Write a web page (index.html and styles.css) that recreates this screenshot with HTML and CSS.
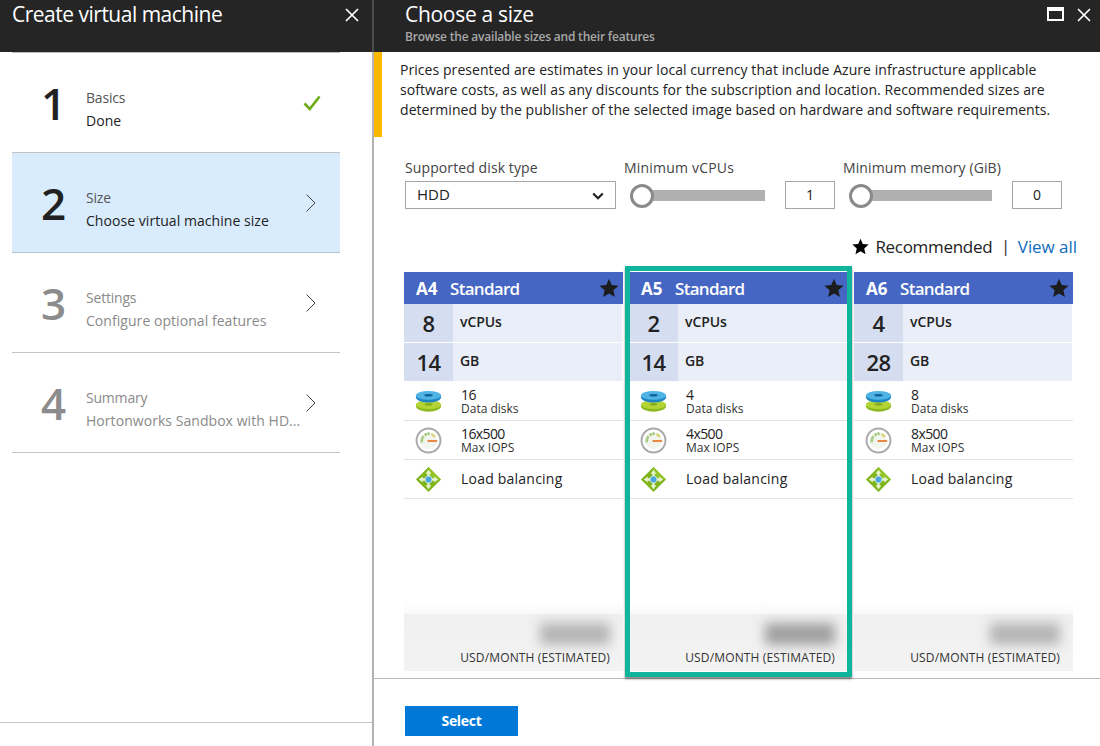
FILE: index.html
```html
<!DOCTYPE html>
<html lang="en">
<head>
<meta charset="utf-8">
<title>Choose a size</title>
<link rel="stylesheet" href="styles.css">
</head>
<body>
<svg class="defs" width="0" height="0">
  <defs>
    <symbol id="i-disk" viewBox="0 0 28 28">
      <ellipse cx="14" cy="19" rx="13" ry="5.5" fill="#8dbb1f"/>
      <ellipse cx="14" cy="17.2" rx="13" ry="4.6" fill="#b4d334"/>
      <ellipse cx="14" cy="17" rx="4" ry="1.2" fill="#7fa81a"/>
      <ellipse cx="14" cy="9.5" rx="13" ry="5.5" fill="#1f86c6"/>
      <ellipse cx="14" cy="7.6" rx="13" ry="4.6" fill="#4fb4e4"/>
      <ellipse cx="14" cy="7.6" rx="4.4" ry="1.3" fill="#12609a"/>
    </symbol>
    <symbol id="i-gauge" viewBox="0 0 28 28">
      <circle cx="14" cy="14" r="12.4" fill="#fff" stroke="#a9a9a9" stroke-width="2"/>
      <circle cx="14" cy="14" r="8.8" fill="#f2f4ee"/>
      <path d="M7 16a7.5 7.5 0 0 1 2-6.5" fill="none" stroke="#a9cf86" stroke-width="2.6"/>
      <path d="M10.2 8.4a7.5 7.5 0 0 1 5-1.3" fill="none" stroke="#8fbf5a" stroke-width="2.6" stroke-dasharray="2 1"/>
      <path d="M17 7.4a7.5 7.5 0 0 1 3.6 3" fill="none" stroke="#d9d37a" stroke-width="2.4"/>
      <path d="M13 14.5h10" stroke="#e8772e" stroke-width="1.8"/>
    </symbol>
    <symbol id="i-lb" viewBox="0 0 28 28">
      <path d="M14 1 27 14 14 27 1 14Z" fill="#7fb41c"/>
      <path d="M14 1 27 14 14 14Z" fill="#93c526"/>
      <path d="M14 4 17 8H15.2V11H12.8V8H11ZM14 24 11 20H12.8V17H15.2V20H17ZM4 14 8 11V12.8H11V15.2H8V17ZM24 14 20 17V15.2H17V12.8H20V11Z" fill="#e8f3cf"/>
      <circle cx="14" cy="14" r="3.6" fill="#4aa6dc" stroke="#d9eef9" stroke-width=".8"/>
    </symbol>
    <symbol id="i-star" viewBox="0 0 20 20">
      <path d="M10 .8 12.7 7.1 19.6 7.7 14.4 12.3 15.9 19.1 10 15.5 4.1 19.1 5.6 12.3 .4 7.7 7.3 7.1Z"/>
    </symbol>
    <symbol id="i-chev" viewBox="0 0 12 20">
      <path d="M1.5 1.5 10 10 1.5 18.5" fill="none" stroke="currentColor" stroke-width="1"/>
    </symbol>
    <symbol id="i-x" viewBox="0 0 14 14">
      <path d="M1 1 13 13M13 1 1 13" fill="none" stroke="currentColor" stroke-width="1.7"/>
    </symbol>
  </defs>
</svg>
<div class="app">
  <section class="left">
    <header class="left-head">
      <h1 class="left-title">Create virtual machine</h1>
      <svg class="close"><use href="#i-x"/></svg>
    </header>
    <div class="steps">
      <div class="step">
        <span class="step-num">1</span>
        <div class="step-text"><span class="step-name">Basics</span><span class="step-desc">Done</span></div>
        <svg class="check" viewBox="0 0 18 16"><path d="M1.5 8.5 6.8 14 16.5 1.5" fill="none" stroke="#6bab13" stroke-width="2.6"/></svg>
      </div>
      <div class="step step-active">
        <span class="step-num">2</span>
        <div class="step-text"><span class="step-name">Size</span><span class="step-desc">Choose virtual machine size</span></div>
        <svg class="chev"><use href="#i-chev"/></svg>
      </div>
      <div class="step step-muted">
        <span class="step-num">3</span>
        <div class="step-text"><span class="step-name">Settings</span><span class="step-desc">Configure optional features</span></div>
        <svg class="chev"><use href="#i-chev"/></svg>
      </div>
      <div class="step step-muted">
        <span class="step-num">4</span>
        <div class="step-text"><span class="step-name">Summary</span><span class="step-desc">Hortonworks Sandbox with HD...</span></div>
        <svg class="chev"><use href="#i-chev"/></svg>
      </div>
    </div>
    <div class="left-foot"></div>
  </section>
  <section class="right">
    <header class="right-head">
      <div>
        <h2 class="right-title">Choose a size</h2>
        <p class="right-sub">Browse the available sizes and their features</p>
      </div>
      <div class="win-btns">
        <span class="maximize"></span>
        <svg class="close close-right"><use href="#i-x"/></svg>
      </div>
    </header>
    <div class="notice">Prices presented are estimates in your local currency that include Azure infrastructure applicable software costs, as well as any discounts for the subscription and location. Recommended sizes are determined by the publisher of the selected image based on hardware and software requirements.</div>
    <div class="filters">
      <div class="filter filter-disk">
        <label class="filter-label">Supported disk type</label>
        <div class="select"><span>HDD</span><svg class="select-arrow" viewBox="0 0 12 8"><path d="M1.2 1.5 6 6.2 10.8 1.5" fill="none" stroke="#222" stroke-width="2.2"/></svg></div>
      </div>
      <div class="filter filter-cpu">
        <label class="filter-label">Minimum vCPUs</label>
        <div class="slider-row">
          <div class="slider"><span class="thumb"></span></div>
          <span class="num-box">1</span>
        </div>
      </div>
      <div class="filter filter-mem">
        <label class="filter-label">Minimum memory (GiB)</label>
        <div class="slider-row">
          <div class="slider"><span class="thumb"></span></div>
          <span class="num-box">0</span>
        </div>
      </div>
    </div>
    <div class="rec-row">
      <svg class="rec-star"><use href="#i-star"/></svg>
      <span>Recommended</span><span class="rec-sep">|</span><a class="rec-link">View all</a>
    </div>
    <div class="cards">
      <article class="card">
        <div class="card-head"><span class="card-id">A4</span><span class="card-tier">Standard</span><svg class="card-star"><use href="#i-star"/></svg></div>
        <div class="spec"><span class="spec-num">8</span><span class="spec-unit">vCPUs</span></div>
        <div class="spec"><span class="spec-num">14</span><span class="spec-unit">GB</span></div>
        <div class="feat"><svg class="feat-icon"><use href="#i-disk"/></svg><div class="feat-text"><span class="feat-val">16</span><span class="feat-lab">Data disks</span></div></div>
        <div class="feat"><svg class="feat-icon"><use href="#i-gauge"/></svg><div class="feat-text"><span class="feat-val">16x500</span><span class="feat-lab">Max IOPS</span></div></div>
        <div class="feat"><svg class="feat-icon"><use href="#i-lb"/></svg><div class="feat-text"><span class="feat-only">Load balancing</span></div></div>
        <div class="price"><div class="price-band"><span class="price-blur"></span></div><span class="price-unit">USD/MONTH (ESTIMATED)</span></div>
      </article>
      <article class="card card-selected">
        <div class="card-head"><span class="card-id">A5</span><span class="card-tier">Standard</span><svg class="card-star"><use href="#i-star"/></svg></div>
        <div class="spec"><span class="spec-num">2</span><span class="spec-unit">vCPUs</span></div>
        <div class="spec"><span class="spec-num">14</span><span class="spec-unit">GB</span></div>
        <div class="feat"><svg class="feat-icon"><use href="#i-disk"/></svg><div class="feat-text"><span class="feat-val">4</span><span class="feat-lab">Data disks</span></div></div>
        <div class="feat"><svg class="feat-icon"><use href="#i-gauge"/></svg><div class="feat-text"><span class="feat-val">4x500</span><span class="feat-lab">Max IOPS</span></div></div>
        <div class="feat"><svg class="feat-icon"><use href="#i-lb"/></svg><div class="feat-text"><span class="feat-only">Load balancing</span></div></div>
        <div class="price"><div class="price-band"><span class="price-blur"></span></div><span class="price-unit">USD/MONTH (ESTIMATED)</span></div>
      </article>
      <article class="card">
        <div class="card-head"><span class="card-id">A6</span><span class="card-tier">Standard</span><svg class="card-star"><use href="#i-star"/></svg></div>
        <div class="spec"><span class="spec-num">4</span><span class="spec-unit">vCPUs</span></div>
        <div class="spec"><span class="spec-num">28</span><span class="spec-unit">GB</span></div>
        <div class="feat"><svg class="feat-icon"><use href="#i-disk"/></svg><div class="feat-text"><span class="feat-val">8</span><span class="feat-lab">Data disks</span></div></div>
        <div class="feat"><svg class="feat-icon"><use href="#i-gauge"/></svg><div class="feat-text"><span class="feat-val">8x500</span><span class="feat-lab">Max IOPS</span></div></div>
        <div class="feat"><svg class="feat-icon"><use href="#i-lb"/></svg><div class="feat-text"><span class="feat-only">Load balancing</span></div></div>
        <div class="price"><div class="price-band"><span class="price-blur"></span></div><span class="price-unit">USD/MONTH (ESTIMATED)</span></div>
      </article>
    </div>
    <footer class="right-foot"><button class="select-btn">Select</button></footer>
  </section>
</div>
</body>
</html>
```
FILE: styles.css
```css
* { box-sizing: border-box; }
html, body { margin: 0; height: 100%; }
body {
  width: 1100px;
  height: 746px;
  overflow: hidden;
  background: #fff;
  color: #222;
  font-family: "Open Sans", "Noto Sans", "Liberation Sans", sans-serif;
  font-size: 14px;
}
.defs { position: absolute; }
.app { display: flex; height: 746px; }

/* Left blade */
.left {
  width: 374px;
  flex: none;
  display: flex;
  flex-direction: column;
  border-right: 2px solid #b3b3b3;
}
.left-head {
  height: 52px;
  flex: none;
  background: #252525;
  color: #fff;
  display: flex;
  justify-content: space-between;
  padding: 0 12px;
  margin-right: -2px;
  border-right: 2px solid #4a4a4a;
}
.left-title {
  margin: 0;
  font-size: 21px;
  font-weight: 400;
  line-height: 29px;
  letter-spacing: -.5px;
}
.close { width: 14px; height: 14px; color: #fff; margin: 8px 1px 0 0; }
.steps { flex: none; margin: 0 32px 0 12px; border-top: 1px solid #bdbdbd; }
.step {
  height: 100px;
  display: flex;
  align-items: center;
  padding-left: 29px;
  border-bottom: 1px solid #c4c4c4;
}
.step-active { background: #d9ecfd; border-bottom-color: #b9c6d2; }
.step-num {
  width: 45px;
  flex: none;
  font-size: 44px;
  line-height: 48px;
  font-weight: 600;
  color: #222;
  letter-spacing: -1px;
}
.step-text { display: flex; flex-direction: column; flex: 1; min-width: 0; gap: 3px; padding-top: 13px; }
.step-name { font-size: 14px; line-height: 20px; color: #555; letter-spacing: -.2px; }
.step-desc { font-size: 14px; line-height: 20px; color: #222; letter-spacing: .05px; white-space: nowrap; }
.step-muted .step-num { color: #8c8c8c; }
.step-muted .step-name, .step-muted .step-desc { color: #8a8a8a; }
.check { width: 18px; height: 16px; flex: none; margin: 0 19px 0 0; }
.chev { width: 12px; height: 20px; flex: none; margin: 0 23px 0 0; color: #444; }
.left-foot { margin-top: auto; height: 24px; border-top: 1px solid #c4c4c4; }

/* Right blade */
.right { flex: 1; min-width: 0; display: flex; flex-direction: column; }
.right-head {
  height: 52px;
  flex: none;
  background: #252525;
  color: #fff;
  display: flex;
  justify-content: space-between;
  padding: 0 9px 0 31px;
}
.right-title {
  margin: 0;
  font-size: 21px;
  font-weight: 400;
  line-height: 29px;
  letter-spacing: -.3px;
}
.right-sub {
  margin: 0;
  font-size: 12px;
  line-height: 15px;
  font-weight: 600;
  color: #a8a8a8;
  letter-spacing: -.2px;
}
.win-btns { display: flex; gap: 13px; align-items: flex-start; }
.maximize {
  width: 17px;
  height: 14px;
  margin-top: 7px;
  border: 2px solid #fff;
  border-top-width: 4px;
}
.close-right { margin: 8px 0 0; }
.notice {
  flex: none;
  height: 85px;
  border-left: 8px solid #fcb900;
  padding: 8px 30px 0 18px;
  font-size: 14px;
  line-height: 20px;
  letter-spacing: .06px;
  color: #222;
}
.filters { display: flex; flex: none; padding: 21px 0 0 31px; height: 72px; }
.filter { display: flex; flex-direction: column; flex: none; width: 219px; }
.filter-label { font-size: 14px; line-height: 20px; color: #444; letter-spacing: .1px; }
.filter-cpu .filter-label { letter-spacing: .2px; }
.select {
  width: 211px;
  height: 28px;
  margin-top: 3px;
  border: 1px solid #a6a6a6;
  display: flex;
  align-items: center;
  justify-content: space-between;
  padding: 0 11px 2px;
  color: #222;
  font-size: 15px;
  line-height: 24px;
}
.select-arrow { width: 12px; height: 8px; margin-top: 3px; }
.slider-row { display: flex; align-items: center; margin-top: 3px; height: 28px; }
.slider { position: relative; width: 132px; height: 11px; margin-left: 9px; background: #b0b0b0; }
.filter-mem .slider { width: 140px; }
.thumb {
  position: absolute;
  left: -3px;
  top: -6px;
  width: 24px;
  height: 24px;
  border-radius: 50%;
  border: 3px solid #8a8a8a;
  background: #fff;
}
.num-box {
  margin-left: 20px;
  width: 50px;
  height: 28px;
  flex: none;
  padding-bottom: 1px;
  border: 1px solid #a6a6a6;
  display: flex;
  align-items: center;
  justify-content: center;
}
.rec-row {
  flex: none;
  height: 26px;
  margin-top: 25px;
  display: flex;
  align-items: center;
  justify-content: flex-end;
  padding: 0 23px 2px 0;
  font-size: 17px;
  letter-spacing: -.3px;
  color: #222;
}
.rec-star { width: 17px; height: 17px; margin-right: 6px; }
.rec-sep { margin: 0 8px 0 9px; font-size: 16px; }
.rec-link { color: #0f6cbd; letter-spacing: -.05px; }
.cards { flex: none; display: flex; gap: 6px; padding: 12px 0 0 30px; height: 418px; }
.card { width: 219px; height: 399px; flex: none; display: flex; flex-direction: column; position: relative; }
.card-selected::after {
  content: "";
  position: absolute;
  left: -4px;
  right: -4px;
  top: -6px;
  bottom: -6px;
  border: 5px solid #10b59b;
  box-shadow: 0 2px 2px rgba(40, 40, 40, .55);
  pointer-events: none;
}
.card-head {
  height: 32px;
  flex: none;
  background: #4666c3;
  color: #fff;
  display: flex;
  align-items: center;
  padding-left: 12px;
  font-size: 17px;
  letter-spacing: -.7px;
}
.card-id { width: 34px; font-weight: 700; letter-spacing: 0; }
.card-tier { flex: 1; font-weight: 600; }
.card-star { width: 20px; height: 20px; margin-right: 4px; fill: #1c1c1c; }
.spec {
  height: 38px;
  flex: none;
  display: flex;
  align-items: stretch;
  background: #e9eef8;
  margin-bottom: 1px;
  margin-right: 1px;
}
.spec-num {
  width: 49px;
  background: #d5ddf1;
  display: flex;
  align-items: center;
  justify-content: center;
  font-size: 22px;
  font-weight: 600;
  color: #222;
  letter-spacing: -.6px;
}
.spec-unit { padding: 0 0 3px 7px; display: flex; align-items: center; font-weight: 600; font-size: 14px; letter-spacing: -.1px; }
.feat {
  height: 39px;
  flex: none;
  display: flex;
  align-items: center;
  padding-left: 11px;
  border-bottom: 1px solid #e4e4e4;
}
.feat-icon { width: 27px; height: 27px; flex: none; margin-right: 19px; }
.feat-text { display: flex; flex-direction: column; padding-top: 1px; }
.feat-val { font-size: 14px; line-height: 14px; letter-spacing: -.6px; font-weight: 500; color: #222; }
.feat-only { font-size: 14px; line-height: 20px; letter-spacing: .22px; font-weight: 500; color: #222; margin-top: -1px; }
.feat-lab { font-size: 12px; line-height: 14px; color: #333; letter-spacing: 0; }
.price {
  margin-top: auto;
  height: 57px;
  background: linear-gradient(#f0f0f0, #f3f3f3);
  display: flex;
  flex-direction: column;
  align-items: flex-end;
  position: relative;
}
.price::before {
  content: "";
  position: absolute;
  left: 0;
  right: 0;
  top: -14px;
  height: 14px;
  background: linear-gradient(rgba(250, 250, 250, 0), #f9f9f9);
}
.price-band { height: 36px; width: 100%; display: flex; justify-content: flex-end; padding: 9px 13px 0 0; }
.price-blur {
  width: 70px;
  height: 22px;
  background: #b5b5b5;
  filter: blur(6px);
}
.card-selected .price-blur { background: #a0a0a0; }
.price-unit {
  font-size: 12px;
  line-height: 14px;
  margin-right: 13px;
  margin-top: 1px;
  color: #333;
  letter-spacing: .14px;
  white-space: nowrap;
}
.right-foot {
  flex: none;
  height: 68px;
  border-top: 1px solid #b8b8b8;
  padding: 27px 0 0 31px;
}
.select-btn {
  width: 113px;
  height: 30px;
  border: 0;
  padding: 0 0 2px;
  background: #0078d7;
  color: #fff;
  font: 700 14px "Open Sans", "Noto Sans", sans-serif;
  letter-spacing: -.3px;
}
```
